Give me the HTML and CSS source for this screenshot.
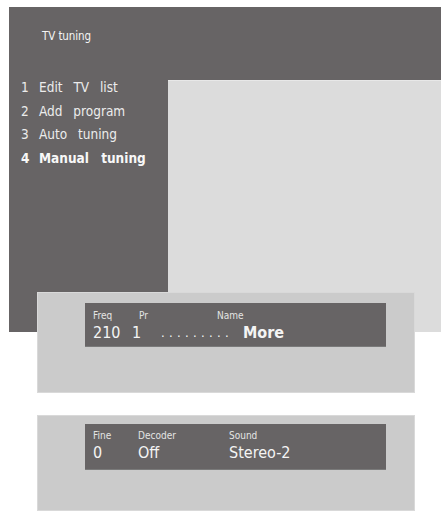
FILE: index.html
```html
<!DOCTYPE html>
<html>
<head>
<meta charset="utf-8">
<link rel="stylesheet" href="styles.css">
</head>
<body>
<div class="stage">
  <div class="screen">
    <div class="header"><span class="title">TV tuning</span></div>
    <div class="main">
      <ol class="menu">
        <li><span class="num">1</span><span class="item">Edit TV list</span></li>
        <li><span class="num">2</span><span class="item">Add program</span></li>
        <li><span class="num">3</span><span class="item">Auto tuning</span></li>
        <li class="active"><span class="num">4</span><span class="item">Manual tuning</span></li>
      </ol>
      <div class="pane"></div>
    </div>
  </div>

  <div class="panel panel-one">
    <div class="bar">
      <div class="labels">
        <span class="c1">Freq</span><span class="c2">Pr</span><span>Name</span>
      </div>
      <div class="values">
        <span class="v1">210</span><span class="v2">1</span><span class="v3">.........</span><span class="strong">More</span>
      </div>
    </div>
  </div>

  <div class="panel panel-two">
    <div class="bar">
      <div class="labels">
        <span class="d1">Fine</span><span class="d2">Decoder</span><span>Sound</span>
      </div>
      <div class="values">
        <span class="d1">0</span><span class="d2">Off</span><span>Stereo-2</span>
      </div>
    </div>
  </div>
</div>
</body>
</html>
```

FILE: styles.css
```css
html, body {
  margin: 0;
  padding: 0;
  background: #ffffff;
}

.stage {
  width: 443px;
  height: 515px;
  overflow: hidden;
  padding-top: 7px;
  box-sizing: border-box;
  font-family: "DejaVu Sans Condensed", "DejaVu Sans", sans-serif;
  color: #f2f2f2;
}

.screen {
  margin-left: 9px;
  width: 432px;
  height: 325px;
  background: #676465;
  display: flex;
  flex-direction: column;
}

.header {
  height: 73px;
  padding-left: 33px;
  box-sizing: border-box;
  padding-top: 18px;
}

.title {
  font-size: 11.5px;
  letter-spacing: -0.1px;
  color: #f4f4f4;
}

.main {
  flex: 1;
  display: flex;
}

.menu {
  width: 159px;
  list-style: none;
  margin: -4px 0 0 0;
  padding: 0 0 0 12px;
  box-sizing: border-box;
}

.menu li {
  display: flex;
  font-size: 13.5px;
  line-height: 23.5px;
  color: #ececec;
}

.menu .num {
  width: 18px;
}

.menu .item {
  word-spacing: 7px;
}

.menu .active {
  font-weight: bold;
  color: #f8f8f8;
}

.menu .active .item {
  word-spacing: 8px;
}

.pane {
  flex: 1;
  background: #dcdcdc;
  border-top: 1px solid #e8e8e8;
}

.panel {
  position: relative;
  z-index: 1;
  margin-left: 37px;
  width: 378px;
  background: #cbcbcb;
  box-sizing: border-box;
  padding-left: 47px;
  border: 1px solid #d9d9d9;
}

.panel-one {
  margin-top: -40px;
  height: 101px;
  padding-top: 10px;
}

.panel-two {
  margin-top: 22px;
  height: 96px;
  padding-top: 8px;
}

.bar {
  width: 301px;
  background: #676465;
  border-bottom: 1px solid #7a7a7a;
  box-sizing: border-box;
  padding-left: 8px;
}

.panel-one .bar {
  height: 44px;
  padding-top: 6px;
}

.panel-two .bar {
  height: 46px;
  padding-top: 5px;
}

.labels {
  display: flex;
  font-size: 10px;
  line-height: 13px;
  color: #e4e4e4;
}

.values {
  display: flex;
  font-size: 16px;
  line-height: 22px;
  color: #f4f4f4;
}

.c1 { width: 46px; }
.c2 { width: 78px; }

.v1 { width: 39px; }
.v2 { width: 29px; }
.v3 { width: 82px; letter-spacing: 4.3px; font-size: 13px; }

.strong { font-weight: bold; }

.d1 { width: 45px; }
.d2 { width: 91px; }
```
